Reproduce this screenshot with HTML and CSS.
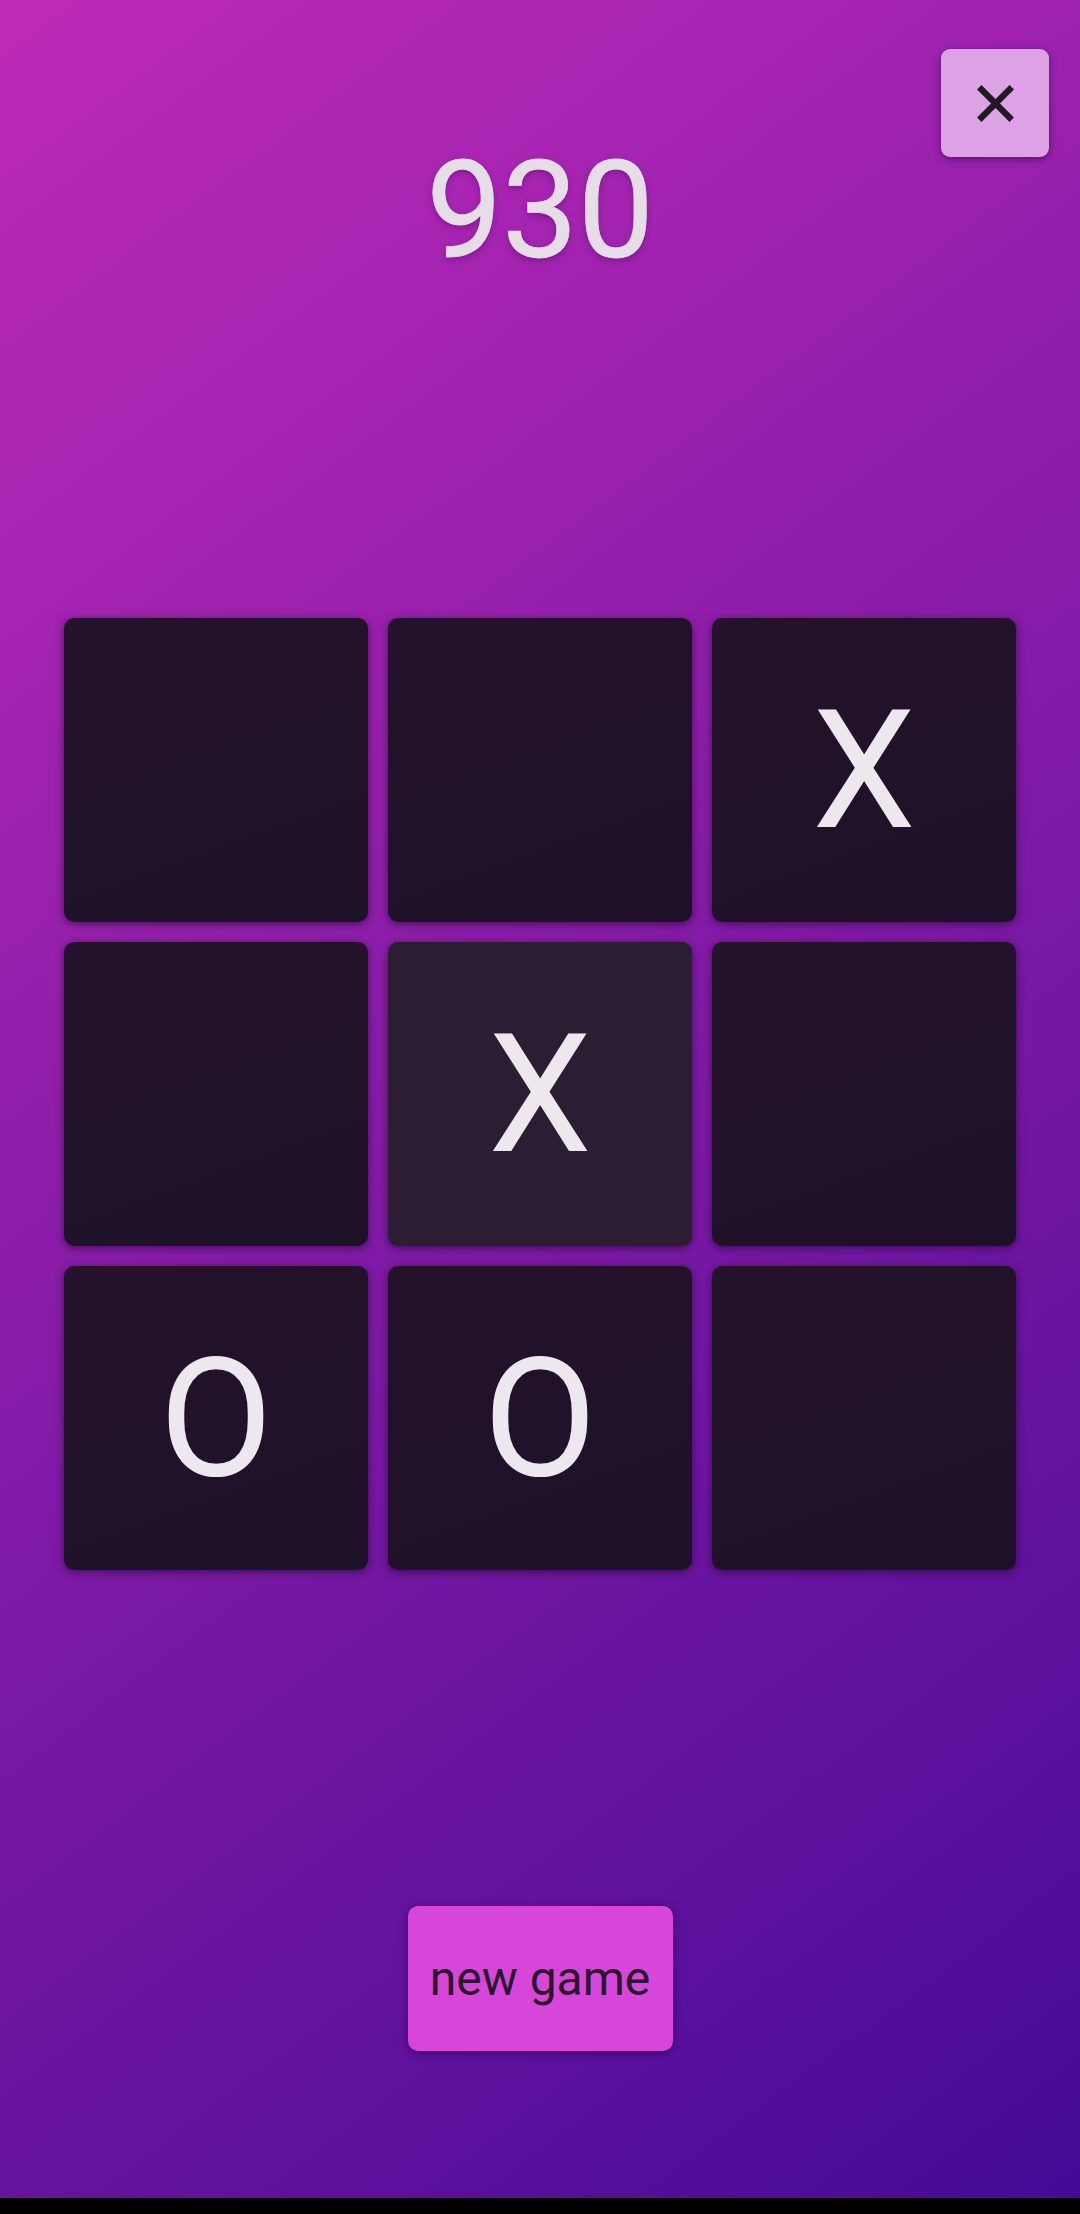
FILE: index.html
```html
<!DOCTYPE html>
<html lang="en">
<head>
<meta charset="utf-8">
<title>Tic Tac Toe</title>
<link rel="stylesheet" href="styles.css">
</head>
<body>
<div class="app">
  <button class="close" aria-label="close">
    <svg class="close-icon" viewBox="0 0 24 24" width="65" height="65"><path d="M6 6L18 18M18 6L6 18"/></svg>
  </button>
  <main class="main">
    <div class="score">930</div>
    <div class="board">
      <div class="cell"></div>
      <div class="cell"></div>
      <div class="cell">X</div>
      <div class="cell"></div>
      <div class="cell cell-active">X</div>
      <div class="cell"></div>
      <div class="cell">O</div>
      <div class="cell">O</div>
      <div class="cell"></div>
    </div>
    <button class="new-game">new game</button>
  </main>
</div>
<div class="navbar"></div>
</body>
</html>
```
FILE: styles.css
```css
html, body {
  margin: 0;
  padding: 0;
}
body {
  width: 1080px;
  height: 2214px;
  overflow: hidden;
  font-family: Roboto, "Noto Sans", sans-serif;
  background: #000;
}
.app {
  position: relative;
  height: 2198px;
  background: linear-gradient(143deg, #be2ab8 0%, #450b96 100%);
}
.close {
  position: absolute;
  top: 49px;
  right: 31px;
  width: 108px;
  height: 108px;
  border: none;
  border-radius: 9px;
  background: #dda2e5;
  box-shadow: 0 2px 7px rgba(30, 0, 40, 0.5);
  display: flex;
  align-items: center;
  justify-content: center;
  padding: 0;
}
.close-icon {
  fill: none;
  stroke: #221a23;
  stroke-width: 2.3;
}
.main {
  display: flex;
  flex-direction: column;
  align-items: center;
  padding-top: 144px;
}
.score {
  font-size: 135px;
  line-height: 1;
  height: 135px;
  color: #e6dee7;
  text-shadow: 0 3px 6px rgba(40, 0, 50, 0.3);
  -webkit-text-stroke: 0.8px #e6dee7;
}
.board {
  margin-top: 339px;
  display: grid;
  grid-template-columns: repeat(3, 304px);
  grid-template-rows: repeat(3, 304px);
  gap: 20px;
}
.cell {
  background: linear-gradient(160deg, #24132a 0%, #1d1127 100%);
  border-radius: 10px;
  box-shadow: 0 2px 8px rgba(20, 0, 30, 0.55);
  display: flex;
  align-items: center;
  justify-content: center;
  font-size: 165px;
  color: #ede7ee;
}
.cell-active {
  background: #2b1d32;
}
.new-game {
  margin-top: 336px;
  width: 265px;
  height: 145px;
  border: none;
  border-radius: 10px;
  background: #d846d9;
  box-shadow: 0 2px 8px rgba(20, 0, 40, 0.45);
  font-family: Roboto, "Noto Sans", sans-serif;
  font-size: 48px;
  color: #27182b;
  display: flex;
  align-items: center;
  justify-content: center;
  padding: 0;
}
.navbar {
  height: 16px;
  background: #000;
}
```
